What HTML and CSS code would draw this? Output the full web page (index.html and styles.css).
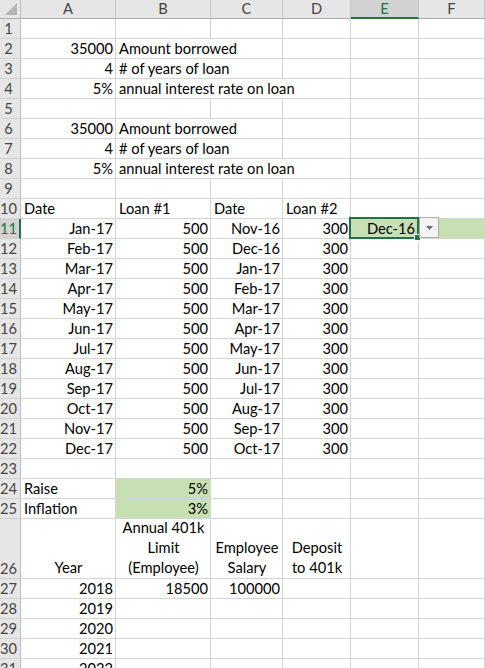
FILE: index.html
```html
<!DOCTYPE html>
<html>
<head>
<meta charset="utf-8">
<link rel="stylesheet" href="styles.css">
</head>
<body>
<div class="sheet">
  <div class="corner"><span class="tri"></span></div>
  <div class="ch">A</div><div class="ch">B</div><div class="ch">C</div><div class="ch">D</div><div class="ch sel">E</div><div class="ch">F</div>

  <div class="rh">1</div><div class="c"></div><div class="c"></div><div class="c"></div><div class="c"></div><div class="c"></div><div class="c"></div>
  <div class="rh">2</div><div class="c r">35000</div><div class="c span2">Amount borrowed</div><div class="c"></div><div class="c"></div><div class="c"></div>
  <div class="rh">3</div><div class="c r">4</div><div class="c span2"># of years of loan</div><div class="c"></div><div class="c"></div><div class="c"></div>
  <div class="rh">4</div><div class="c r">5%</div><div class="c span3">annual interest rate on loan</div><div class="c"></div><div class="c"></div>
  <div class="rh">5</div><div class="c"></div><div class="c"></div><div class="c"></div><div class="c"></div><div class="c"></div><div class="c"></div>
  <div class="rh">6</div><div class="c r">35000</div><div class="c span2">Amount borrowed</div><div class="c"></div><div class="c"></div><div class="c"></div>
  <div class="rh">7</div><div class="c r">4</div><div class="c span2"># of years of loan</div><div class="c"></div><div class="c"></div><div class="c"></div>
  <div class="rh">8</div><div class="c r">5%</div><div class="c span3">annual interest rate on loan</div><div class="c"></div><div class="c"></div>
  <div class="rh">9</div><div class="c"></div><div class="c"></div><div class="c"></div><div class="c"></div><div class="c"></div><div class="c"></div>
  <div class="rh">10</div><div class="c">Date</div><div class="c">Loan #1</div><div class="c">Date</div><div class="c">Loan #2</div><div class="c"></div><div class="c"></div>
  <div class="rh rsel">11</div><div class="c r">Jan-17</div><div class="c r">500</div><div class="c r">Nov-16</div><div class="c r">300</div><div class="c r green active">Dec-16<span class="handle"></span><span class="dd"><svg width="7" height="4" viewBox="0 0 7 4"><path d="M0 0h7L3.5 4z" fill="#6d6d6d"/></svg></span></div><div class="c green"></div>
  <div class="rh">12</div><div class="c r">Feb-17</div><div class="c r">500</div><div class="c r">Dec-16</div><div class="c r">300</div><div class="c"></div><div class="c"></div>
  <div class="rh">13</div><div class="c r">Mar-17</div><div class="c r">500</div><div class="c r">Jan-17</div><div class="c r">300</div><div class="c"></div><div class="c"></div>
  <div class="rh">14</div><div class="c r">Apr-17</div><div class="c r">500</div><div class="c r">Feb-17</div><div class="c r">300</div><div class="c"></div><div class="c"></div>
  <div class="rh">15</div><div class="c r">May-17</div><div class="c r">500</div><div class="c r">Mar-17</div><div class="c r">300</div><div class="c"></div><div class="c"></div>
  <div class="rh">16</div><div class="c r">Jun-17</div><div class="c r">500</div><div class="c r">Apr-17</div><div class="c r">300</div><div class="c"></div><div class="c"></div>
  <div class="rh">17</div><div class="c r">Jul-17</div><div class="c r">500</div><div class="c r">May-17</div><div class="c r">300</div><div class="c"></div><div class="c"></div>
  <div class="rh">18</div><div class="c r">Aug-17</div><div class="c r">500</div><div class="c r">Jun-17</div><div class="c r">300</div><div class="c"></div><div class="c"></div>
  <div class="rh">19</div><div class="c r">Sep-17</div><div class="c r">500</div><div class="c r">Jul-17</div><div class="c r">300</div><div class="c"></div><div class="c"></div>
  <div class="rh">20</div><div class="c r">Oct-17</div><div class="c r">500</div><div class="c r">Aug-17</div><div class="c r">300</div><div class="c"></div><div class="c"></div>
  <div class="rh">21</div><div class="c r">Nov-17</div><div class="c r">500</div><div class="c r">Sep-17</div><div class="c r">300</div><div class="c"></div><div class="c"></div>
  <div class="rh">22</div><div class="c r">Dec-17</div><div class="c r">500</div><div class="c r">Oct-17</div><div class="c r">300</div><div class="c"></div><div class="c"></div>
  <div class="rh">23</div><div class="c"></div><div class="c"></div><div class="c"></div><div class="c"></div><div class="c"></div><div class="c"></div>
  <div class="rh">24</div><div class="c">Raise</div><div class="c r green">5%</div><div class="c"></div><div class="c"></div><div class="c"></div><div class="c"></div>
  <div class="rh">25</div><div class="c">Inflation</div><div class="c r green">3%</div><div class="c"></div><div class="c"></div><div class="c"></div><div class="c"></div>
  <div class="rh rb">26</div><div class="c ctr wrap">Year</div><div class="c ctr wrap">Annual 401k<br>Limit<br>(Employee)</div><div class="c ctr wrap">Employee<br>Salary</div><div class="c ctr wrap">Deposit<br>to 401k</div><div class="c"></div><div class="c"></div>
  <div class="rh">27</div><div class="c r">2018</div><div class="c r">18500</div><div class="c r">100000</div><div class="c"></div><div class="c"></div><div class="c"></div>
  <div class="rh">28</div><div class="c r">2019</div><div class="c"></div><div class="c"></div><div class="c"></div><div class="c"></div><div class="c"></div>
  <div class="rh">29</div><div class="c r">2020</div><div class="c"></div><div class="c"></div><div class="c"></div><div class="c"></div><div class="c"></div>
  <div class="rh">30</div><div class="c r">2021</div><div class="c"></div><div class="c"></div><div class="c"></div><div class="c"></div><div class="c"></div>
  <div class="rh">31</div><div class="c r">2022</div><div class="c"></div><div class="c"></div><div class="c"></div><div class="c"></div><div class="c"></div>
</div>
</body>
</html>
```

FILE: styles.css
```css
html, body {
  margin: 0;
  padding: 0;
  background: #fff;
  overflow: hidden;
  height: 668px;
}

.sheet {
  display: grid;
  grid-template-columns: 21px 95px 95px 72px 68px 68px 66px;
  grid-template-rows: 19px repeat(25, 20px) 60px repeat(5, 20px);
  font-family: Lato, "Open Sans", sans-serif;
  font-size: 14.67px;
  color: #000;
  width: 485px;
}

.corner {
  background: #e6e6e6;
  border-right: 1px solid #bdbdbd;
  border-bottom: 1px solid #ababab;
  position: relative;
}
.corner .tri {
  position: absolute;
  right: 3px;
  bottom: 3px;
  width: 0;
  height: 0;
  border-left: 12px solid transparent;
  border-bottom: 12px solid #b5b5b5;
}

.ch {
  background: #e6e6e6;
  border-right: 1px solid #c6c6c6;
  border-bottom: 1px solid #ababab;
  color: #444;
  display: flex;
  align-items: center;
  justify-content: center;
  line-height: 18px;
}
.ch.sel {
  background: #d2d2d2;
  color: #217346;
  border-bottom: 2px solid #217346;
}

.rh {
  background: #e6e6e6;
  border-right: 1px solid #bdbdbd;
  border-bottom: 1px solid #cfcfcf;
  color: #444;
  display: flex;
  align-items: center;
  justify-content: center;
  padding: 1px 4px 0 1px;
  line-height: 18px;
}
.rh.rb {
  align-items: flex-end;
}
.rh.rsel {
  background: #d2d2d2;
  color: #217346;
  border-right: 2px solid #217346;
  padding-right: 3px;
}

.c {
  border-right: 1px solid #d4d4d4;
  border-bottom: 1px solid #d4d4d4;
  padding: 0 2px 0 3px;
  display: flex;
  align-items: flex-end;
  white-space: nowrap;
  line-height: 18px;
  min-width: 0;
}
.c.r { justify-content: flex-end; }
.c.ctr { justify-content: center; text-align: center; }
.c.wrap { white-space: normal; line-height: 20px; }
.span2 { grid-column: span 2; }
.span3 { grid-column: span 3; }
.green { background: #c6e0b4; }

.active {
  position: relative;
  padding-right: 3px;
}
.active::after {
  content: "";
  position: absolute;
  left: -2px;
  top: -2px;
  right: -1px;
  bottom: -1px;
  border: 2px solid #217346;
  pointer-events: none;
}
.handle {
  position: absolute;
  right: -3px;
  bottom: -3px;
  width: 5px;
  height: 5px;
  background: #217346;
  border: 1px solid #fff;
  z-index: 2;
}
.dd {
  position: absolute;
  left: calc(100% + 1px);
  top: -2px;
  width: 18px;
  height: 19px;
  background: #f3f3f3;
  border: 1px solid #ababab;
  display: flex;
  align-items: center;
  justify-content: center;
  z-index: 3;
}
```
